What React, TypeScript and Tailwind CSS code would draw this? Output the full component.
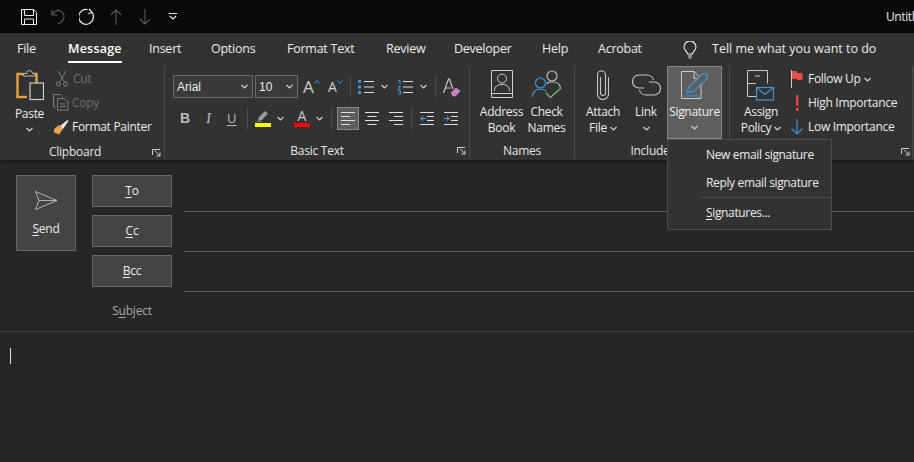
const fontStack = "font-['Open_Sans','Noto_Sans',sans-serif]";

const TABS: [string, string][] = [
  ["File", "w-[51px]"],
  ["Message", "w-[81px]"],
  ["Insert", "w-[62px]"],
  ["Options", "w-[76px]"],
  ["Format Text", "w-[99px]"],
  ["Review", "w-[68px]"],
  ["Developer", "w-[88px]"],
  ["Help", "w-[56px]"],
  ["Acrobat", "w-[85px]"],
];

function Chevron({ className = "" }: { className?: string }) {
  return (
    <svg width="7" height="5" viewBox="0 0 7 5" className={className} fill="none" stroke="#d4d4d4" strokeWidth="1.2">
      <path d="M0.5 1l3 3 3-3" />
    </svg>
  );
}

function Launcher() {
  return (
    <svg width="9" height="8" viewBox="0 0 9 8" fill="none" stroke="#cfcfcf" strokeWidth="1">
      <path d="M0.5 6V0.5H8M3 1.8L8 6.8M8 3.5V7H4.5" />
    </svg>
  );
}

function GroupLabel({ children }: { children: React.ReactNode }) {
  return <div className="h-[20px] text-center text-[12px] leading-[24px] tracking-[-0.25px] text-[#e6e6e6]">{children}</div>;
}

function Sep({ className = "h-[22px]" }: { className?: string }) {
  return <div className={`w-px bg-[#4d4d4d] ${className}`} />;
}

function Underlined({ first, rest }: { first: string; rest: string }) {
  return (
    <>
      <span className="underline underline-offset-2">{first}</span>
      {rest}
    </>
  );
}

function QuickBar() {
  return (
    <div className="flex h-[33px] items-center bg-[#0a0a0a] pl-[21px] pr-0">
      <svg width="16" height="16" viewBox="0 0 16 16" fill="none" stroke="#ececec" strokeWidth="1">
        <path d="M0.5 0.5H12.5L15.5 3.5V15.5H0.5Z M3.5 0.5V6.5H12.5V0.5 M3.5 15.5V10H12.5V15.5" />
      </svg>
      <svg className="ml-[14px]" width="15" height="16" viewBox="0 0 15 16" fill="none" stroke="#5c5c5c" strokeWidth="1.1">
        <path d="M1 1v5h5M1 6c2-3.5 4.5-5 7-4.6 3.5.6 5.5 4 5 7-.4 2.5-2 4.5-6 6.6" />
      </svg>
      <svg className="ml-[13px]" width="17" height="17" viewBox="0 0 17 17" fill="none" stroke="#ececec" strokeWidth="1.2">
        <path d="M10 1l3 3.2-3.6 1.6M12.8 4.2A7.4 7.4 0 1 1 8.5 1.6" />
      </svg>
      <svg className="ml-[14px]" width="12" height="16" viewBox="0 0 12 16" fill="none" stroke="#5c5c5c" strokeWidth="1.1">
        <path d="M6 16V1M0.8 6L6 1l5.2 5" />
      </svg>
      <svg className="ml-[17px]" width="12" height="16" viewBox="0 0 12 16" fill="none" stroke="#5c5c5c" strokeWidth="1.1">
        <path d="M6 0v15M0.8 10L6 15l5.2-5" />
      </svg>
      <svg className="ml-[18px]" width="8" height="7" viewBox="0 0 8 7" fill="none" stroke="#ececec" strokeWidth="1.1">
        <path d="M0 0.5h8M0.8 3l3.2 3 3.2-3" />
      </svg>
      <div className="ml-auto w-[28px] whitespace-nowrap text-[12px] tracking-[-0.4px] text-[#e8e8e8]">Untitl</div>
    </div>
  );
}

function TabsRow() {
  return (
    <div className="flex h-[33px] items-center pl-[17px] text-[12.5px] tracking-[-0.25px] text-[#ececec]">
      {TABS.map(([t, w]) =>
        t === "Message" ? (
          <div key={t} className={w}>
            <span className="relative inline-block font-semibold tracking-[0.2px] text-white">
              {t}
              <span className="absolute -bottom-[4px] left-0 right-0 h-[2px] bg-white" />
            </span>
          </div>
        ) : (
          <div key={t} className={w}>{t}</div>
        )
      )}
      <svg width="14" height="18" viewBox="0 0 14 18" fill="none" stroke="#ececec" strokeWidth="1.1">
        <path d="M4.5 13c0-2.500-3.500-3.500-3.500-7a6 6 0 0 1 12 0c0 3.500-3.500 4.500-3.500 7ZM5 15h4M5.500 17h3" />
      </svg>
      <div className="ml-[15px] tracking-[0px]">Tell me what you want to do</div>
    </div>
  );
}

function ClipboardGroup() {
  return (
    <div className="flex w-[165px] flex-col border-r border-[#4a4a4a]">
      <div className="flex h-[74px] flex-1 text-[12px] tracking-[-0.3px] text-[#ececec]">
        <div className="flex w-[53px] flex-col items-center pl-[6px] pt-[4px]">
          <svg width="28" height="31" viewBox="0 0 28 31" fill="none">
            <path d="M7 4H1.500V27H11" stroke="#e9a23b" strokeWidth="2.400" />
            <path d="M17 4h3.500v9" stroke="#e9a23b" strokeWidth="2.400" />
            <path d="M7.500 6V3.500h3a3 3 0 0 1 6 0h2.500V6Z" stroke="#bdbdbd" strokeWidth="1" fill="#323232" />
            <rect x="14" y="13" width="13.500" height="16.500" stroke="#cfcfcf" strokeWidth="1.200" fill="#323232" />
          </svg>
          <div className="mt-[4px] leading-[17px]">Paste</div>
          <Chevron className="mt-[5px]" />
        </div>
        <div className="flex flex-col pt-[1px]">
          <div className="flex h-[24px] items-center text-[#6e6e6e]">
            <svg width="12" height="17" viewBox="0 0 12 17" fill="none" stroke="#7d7d7d" strokeWidth="1" className="ml-[3px] mr-[5px]">
              <path d="M2 1l6.500 11M10 1L3.500 12" />
              <circle cx="2.500" cy="14" r="2" />
              <circle cx="9.500" cy="14" r="2" />
            </svg>
            Cut
          </div>
          <div className="flex h-[24px] items-center text-[#6e6e6e]">
            <svg width="16" height="17" viewBox="0 0 16 17" fill="none" stroke="#7d7d7d" strokeWidth="1" className="mr-[3px]">
              <path d="M3 13H0.500V0.500H7L9 2.500M4.500 4.500H11L15 8V16H4.500ZM7 10h5.500M7 12.500h5.500" />
            </svg>
            Copy
          </div>
          <div className="flex h-[26px] items-center">
            <svg width="16" height="15" viewBox="0 0 16 15" className="mr-[3px]">
              <path d="M1 9l5-4 4 4-4 5.500-5-2Z" fill="#e6a14a" />
              <path d="M7 6l3 3 5.500-8-1-1Z" fill="#e8e8e8" />
            </svg>
            Format Painter
          </div>
        </div>
      </div>
      <div className="flex items-center pl-[49px] pr-[3px]">
        <div className="w-[52px]">
          <GroupLabel>Clipboard</GroupLabel>
        </div>
        <div className="ml-auto flex h-[20px] items-center pt-[5px]">
          <Launcher />
        </div>
      </div>
    </div>
  );
}

function Dropdown({ value, width }: { value: string; width: string }) {
  return (
    <div className={`flex h-[23px] items-center justify-between border border-[#6a6a6a] bg-[#3a3a3a] pl-[3px] pr-[4px] font-['Liberation_Sans',sans-serif] text-[12px] text-[#ececec] ${width}`}>
      {value}
      <Chevron />
    </div>
  );
}

function ListIcon({ numbered }: { numbered?: boolean }) {
  return (
    <svg width="16" height="16" viewBox="0 0 16 16" fill="none">
      {numbered ? (
        <>
          <path d="M1 1.500h2V5M1 7.500h2.500L1 10.500h2.500M1 12h2.500v3H1" stroke="#3a96dd" strokeWidth="1" />
        </>
      ) : (
        <>
          <rect x="0" y="1" width="3" height="3" fill="#3a96dd" />
          <rect x="0" y="12" width="3" height="3" fill="#3a96dd" />
          <rect x="0" y="6.500" width="3" height="3" fill="#3a96dd" />
        </>
      )}
      <path d="M6 2.500h10M6 8h10M6 13.500h10" stroke="#dcdcdc" strokeWidth="1" />
    </svg>
  );
}

function AlignIcon({ kind }: { kind: "left" | "center" | "right" }) {
  const d =
    kind === "left"
      ? "M0 1.500h14M0 5.500h9M0 9.500h14M0 13.500h9"
      : kind === "center"
        ? "M0 1.500h14M2.500 5.500h9M0 9.500h14M2.500 13.500h9"
        : "M0 1.500h14M5 5.500h9M0 9.500h14M5 13.500h9";
  return (
    <svg width="14" height="15" viewBox="0 0 14 15" fill="none" stroke="#e0e0e0" strokeWidth="1">
      <path d={d} />
    </svg>
  );
}

function IndentIcon({ flip }: { flip?: boolean }) {
  return (
    <svg width="14" height="15" viewBox="0 0 14 15" fill="none">
      <path d="M0 1.500h14M7 5.500h7M7 9.500h7M0 13.500h14" stroke="#dcdcdc" strokeWidth="1" />
      <path d={flip ? "M0 7.500h5M3 5.500l2 2-2 2" : "M1 7.500h5M3 5.500l-2 2 2 2"} stroke="#3a96dd" strokeWidth="1.200" />
    </svg>
  );
}

function BasicTextGroup() {
  return (
    <div className="flex w-[305px] flex-col border-r border-[#4a4a4a]">
      <div className="flex-1 pl-[8px] pt-[9px]">
        <div className="flex h-[23px] items-center">
          <Dropdown value="Arial" width="w-[80px]" />
          <div className="w-[2px]" />
          <Dropdown value="10" width="w-[43px]" />
          <div className="ml-[5px] flex w-[22px] items-start font-['Open_Sans',sans-serif] text-[17px] leading-[20px] text-[#cfcfcf]">
            A
            <svg width="6" height="4" viewBox="0 0 6 4" className="mt-[3px]" fill="none" stroke="#3a96dd" strokeWidth="1">
              <path d="M0.500 3.500l2.500-3 2.500 3" />
            </svg>
          </div>
          <div className="ml-[3px] flex w-[19px] items-start font-['Open_Sans',sans-serif] text-[14px] leading-[20px] text-[#cfcfcf]">
            A
            <svg width="6" height="4" viewBox="0 0 6 4" className="mt-[3px]" fill="none" stroke="#3a96dd" strokeWidth="1">
              <path d="M0.500 0.500l2.500 3 2.500-3" />
            </svg>
          </div>
          <Sep className="ml-[3px] h-[22px]" />
          <div className="ml-[7px] flex w-[39px] items-center gap-[7px]">
            <ListIcon />
            <Chevron />
          </div>
          <div className="flex w-[38px] items-center gap-[7px]">
            <ListIcon numbered />
            <Chevron />
          </div>
          <Sep />
          <svg className="ml-[7px]" width="18" height="20" viewBox="0 0 18 20" fill="none">
            <path d="M0.500 16L5.500 2h1L10 12" stroke="#c8c8c8" strokeWidth="1.200" />
            <path d="M2 11h6" stroke="#c8c8c8" strokeWidth="1" />
            <path d="M8 16l5-5 4 3-4.500 5H10Z" fill="#c77fc7" stroke="#c77fc7" />
          </svg>
        </div>
        <div className="mt-[9px] flex h-[23px] items-center">
          <div className="w-[24px] pl-[7px] font-['Liberation_Sans',sans-serif] text-[14px] font-bold text-[#bdbdbd]">B</div>
          <div className="w-[24px] pl-[9px] font-['Liberation_Serif',serif] text-[15px] italic text-[#bdbdbd]">I</div>
          <div className="w-[26px] pl-[6px] font-['Open_Sans',sans-serif] text-[13px] text-[#bdbdbd] underline underline-offset-2">U</div>
          <Sep />
          <div className="ml-[7px] flex flex-col items-center">
            <svg width="16" height="12" viewBox="0 0 16 12">
              <path d="M3 11l1-4 6-6 3 2.500-6 6.500Z" fill="#9a9a9a" />
              <path d="M0 12h7" stroke="#9a9a9a" />
            </svg>
            <div className="mt-[1px] h-[4px] w-[16px] bg-[#ffff00]" />
          </div>
          <Chevron className="ml-[6px]" />
          <div className="ml-[10px] flex w-[16px] flex-col items-center">
            <div className="h-[12px] font-['Open_Sans',sans-serif] text-[14px] leading-[12px] text-[#c8c8c8]">A</div>
            <div className="mt-[1px] h-[4px] w-[16px] bg-[#ff0000]" />
          </div>
          <Chevron className="ml-[6px]" />
          <Sep className="ml-[8px] h-[22px]" />
          <div className="ml-[5px] flex h-[23px] w-[22px] items-center justify-center border border-[#8a8a8a] bg-[#5c5c5a]">
            <AlignIcon kind="left" />
          </div>
          <div className="ml-[6px]">
            <AlignIcon kind="center" />
          </div>
          <div className="ml-[10px]">
            <AlignIcon kind="right" />
          </div>
          <Sep className="ml-[8px] h-[22px]" />
          <div className="ml-[8px]">
            <IndentIcon />
          </div>
          <div className="ml-[10px]">
            <IndentIcon flip />
          </div>
        </div>
      </div>
      <div className="relative">
        <GroupLabel>Basic Text</GroupLabel>
        <div className="absolute right-[3px] top-[8px]">
          <Launcher />
        </div>
      </div>
    </div>
  );
}

function BigButton({ icon, lines, chevron, width }: { icon: React.ReactNode; lines: [string, string]; chevron?: boolean; width: string }) {
  return (
    <div className={`flex flex-col items-center text-[12px] leading-[16px] tracking-[-0.3px] text-[#ececec] ${width}`}>
      <div className="flex h-[38px] items-start pt-[4px]">{icon}</div>
      <div className="whitespace-nowrap">{lines[0]}</div>
      <div className="flex h-[16px] items-center gap-[3px] whitespace-nowrap">
        {lines[1]}
        {chevron && <Chevron />}
      </div>
    </div>
  );
}

function NamesGroup() {
  return (
    <div className="flex w-[105px] flex-col border-r border-[#4a4a4a]">
      <div className="flex flex-1 pl-[9px]">
        <BigButton
          width="w-[45px]"
          lines={["Address", "Book"]}
          icon={
            <svg width="22" height="28" viewBox="0 0 22 28" fill="none" stroke="#cfcfcf" strokeWidth="1">
              <path d="M0.500 0.500h21v27h-21ZM0.500 23.500h21" />
              <circle cx="11" cy="8.500" r="4.500" />
              <path d="M3.500 21c0-4.500 3-6.500 7.500-6.500s7.500 2 7.500 6.500" />
            </svg>
          }
        />
        <BigButton
          width="w-[45px]"
          lines={["Check", "Names"]}
          icon={
            <svg width="30" height="28" viewBox="0 0 30 28" fill="none" strokeWidth="1.200">
              <circle cx="20" cy="6" r="5" stroke="#bdbdbd" />
              <path d="M16 14c-2-1 1-2 4-2 5 0 8 2 8.500 6" stroke="#bdbdbd" />
              <circle cx="8.500" cy="13" r="5" stroke="#3a96dd" />
              <path d="M0.500 27c0-5 3.500-8 8-8 2.500 0 4.500 1 6 2.500" stroke="#3a96dd" />
              <path d="M14 23l4.500 4.500L29 18" stroke="#6cc56c" />
            </svg>
          }
        />
      </div>
      <GroupLabel>Names</GroupLabel>
    </div>
  );
}

function IncludeGroup() {
  return (
    <div className="flex w-[155px] flex-col border-r border-[#4a4a4a]">
      <div className="flex flex-1 pl-[6px]">
        <BigButton
          width="w-[44px]"
          lines={["Attach", "File"]}
          chevron
          icon={
            <svg width="12" height="30" viewBox="0 0 12 30" fill="none" stroke="#c8c8c8" strokeWidth="1.100">
              <path d="M3.500 7v16a2.500 2.500 0 0 0 5 0V5a4 4 0 0 0-8 0v19a5.500 5.500 0 0 0 11 0V7" />
            </svg>
          }
        />
        <BigButton
          width="w-[42px]"
          lines={["Link", ""]}
          chevron
          icon={
            <svg width="29" height="22" viewBox="0 0 29 22" className="mt-[4px]" fill="none" stroke="#c8c8c8" strokeWidth="1.100">
              <path d="M12 14H7a6.500 6.500 0 0 1 0-13h8c3.500 0 6 2.500 6.500 5" />
              <path d="M17 8h5a6.500 6.500 0 0 1 0 13h-8c-3.500 0-6-2.500-6.500-5" />
            </svg>
          }
        />
        <div className="flex h-[73px] w-[55px] flex-col items-center border border-[#868684] bg-[#5e5e5c] text-[12px] leading-[16px] tracking-[-0.3px] text-[#f0f0f0]">
          <svg className="mt-[4px]" width="28" height="28" viewBox="0 0 28 28" fill="none">
            <path d="M0.500 0.500H13L20 7.500V27.500H0.500Z" stroke="#cfcfcf" strokeWidth="1" />
            <path d="M13 0.500V7.500H20" stroke="#cfcfcf" strokeWidth="1" />
            <path d="M6 22l2-6L21 3.500c1.500-1.500 3-1.500 4.500 0s1.500 3 0 4.500L12.500 20.500Z" stroke="#3a96dd" strokeWidth="1.300" fill="#5e5e5c" />
            <path d="M4 25h16" stroke="#3a96dd" strokeWidth="1.100" />
          </svg>
          <div className="mt-[5px]">Signature</div>
          <Chevron className="mt-[5px]" />
        </div>
      </div>
      <div className="w-[150px]">
        <GroupLabel>Include</GroupLabel>
      </div>
    </div>
  );
}

function TagsGroup() {
  return (
    <div className="flex w-[183px] flex-col border-r border-[#4a4a4a]">
      <div className="flex flex-1 pl-[9px] text-[12px] tracking-[-0.3px] text-[#ececec]">
        <BigButton
          width="w-[44px]"
          lines={["Assign", "Policy"]}
          chevron
          icon={
            <svg width="28" height="31" viewBox="0 0 28 31" fill="none">
              <path d="M0.500 0.500h20v13M0.500 0.500v26H9M0.500 13.500H9" stroke="#c8c8c8" strokeWidth="1" />
              <path d="M8 6h5" stroke="#c8c8c8" strokeWidth="1" />
              <rect x="9.500" y="17.500" width="17" height="12.500" stroke="#3a96dd" strokeWidth="1.200" />
              <path d="M9.500 17.500l8.500 7 8.500-7" stroke="#3a96dd" strokeWidth="1.200" />
            </svg>
          }
        />
        <div className="ml-[8px] flex flex-col pt-[1px]">
          <div className="flex h-[24px] items-center">
            <svg className="mr-[5px]" width="12" height="18" viewBox="0 0 12 18">
              <path d="M0.500 0v18" stroke="#c8c8c8" />
              <rect x="1" y="1" width="5" height="8" fill="#e94b4b" />
              <rect x="6" y="3" width="5.500" height="7" fill="#e94b4b" />
            </svg>
            Follow Up
            <Chevron className="ml-[3px]" />
          </div>
          <div className="flex h-[24px] items-center">
            <svg className="mr-[5px]" width="12" height="16" viewBox="0 0 12 16">
              <rect x="5" y="0" width="2.500" height="11" fill="#e04343" />
              <rect x="5" y="13" width="2.500" height="3" fill="#e04343" />
            </svg>
            High Importance
          </div>
          <div className="flex h-[24px] items-center">
            <svg className="mr-[5px]" width="12" height="16" viewBox="0 0 12 16" fill="none" stroke="#3a96dd" strokeWidth="1.200">
              <path d="M6 0v15M0.500 9.500L6 15l5.500-5.500" />
            </svg>
            Low Importance
          </div>
        </div>
      </div>
      <div className="flex h-[20px] items-center justify-end pr-[2px] pt-[5px]">
        <Launcher />
      </div>
    </div>
  );
}

function SignatureMenu() {
  return (
    <div className="absolute left-[667px] top-[139px] z-10 h-[91px] w-[165px] border border-[#4c4c4c] bg-[#323232] pr-[1px] text-[12px] tracking-[-0.35px] text-[#ececec]">
      <div className="flex h-[28px] items-center pl-[38px] pt-[2px]">New email signature</div>
      <div className="flex h-[28px] items-center pl-[38px] pt-[2px]">Reply email signature</div>
      <div className="ml-[33px] mt-[1px] h-px bg-[#4f4f4f]" />
      <div className="flex h-[30px] items-center pl-[38px]">
        <span><Underlined first="S" rest="ignatures..." /></span>
      </div>
    </div>
  );
}

function RecipientButton({ first, rest }: { first: string; rest: string }) {
  return (
    <div className="flex h-[32px] w-[80px] items-center justify-center border border-[#686868] bg-[#444444] text-[12px] tracking-[-0.2px] text-[#ececec]">
      <span><Underlined first={first} rest={rest} /></span>
    </div>
  );
}

function Compose() {
  const rows: [string, string][] = [["T", "o"], ["C", "c"], ["B", "cc"]];
  return (
    <>
      <div className="flex h-[172px] border-b border-[#3c3c3c] pl-[16px] pt-[15px]">
        <div className="flex h-[76px] w-[60px] flex-col items-center border border-[#686868] bg-[#444444] text-[12px] tracking-[-0.2px] text-[#ececec]">
          <svg className="mt-[15px]" width="23" height="19" viewBox="0 0 23 19" fill="none" stroke="#b4b4b4" strokeWidth="1">
            <path d="M0.500 0.500L22 9.500 0.500 18.500 4 9.500ZM4 9.500H22" />
          </svg>
          <div className="mt-[10px] leading-[17px]">
            <Underlined first="S" rest="end" />
          </div>
        </div>
        <div className="ml-[16px] flex flex-1 flex-col">
          {rows.map(([f, r]) => (
            <div key={f} className="flex h-[40px] items-start">
              <RecipientButton first={f} rest={r} />
              <div className="ml-[12px] h-[37px] flex-1 border-b border-[#5f5f5f]" />
            </div>
          ))}
          <div className="w-[80px] pt-[7px] text-center text-[12px] tracking-[-0.2px] text-[#a8a8a8]">
            S<span className="underline underline-offset-2">u</span>bject
          </div>
        </div>
      </div>
      <div className="pl-[10px] pt-[16px]">
        <div className="h-[16px] w-px bg-[#e0e0e0]" />
      </div>
    </>
  );
}

export default function App() {
  return (
    <div className={`relative h-[462px] w-[914px] overflow-hidden bg-[#262626] ${fontStack}`}>
      <QuickBar />
      <div className="relative h-[127px] bg-[#323232] shadow-[0_2px_4px_rgba(0,0,0,0.35)]">
        <TabsRow />
        <div className="flex h-[94px] pb-[1px]">
          <ClipboardGroup />
          <BasicTextGroup />
          <NamesGroup />
          <IncludeGroup />
          <TagsGroup />
        </div>
      </div>
      <SignatureMenu />
      <Compose />
    </div>
  );
}
